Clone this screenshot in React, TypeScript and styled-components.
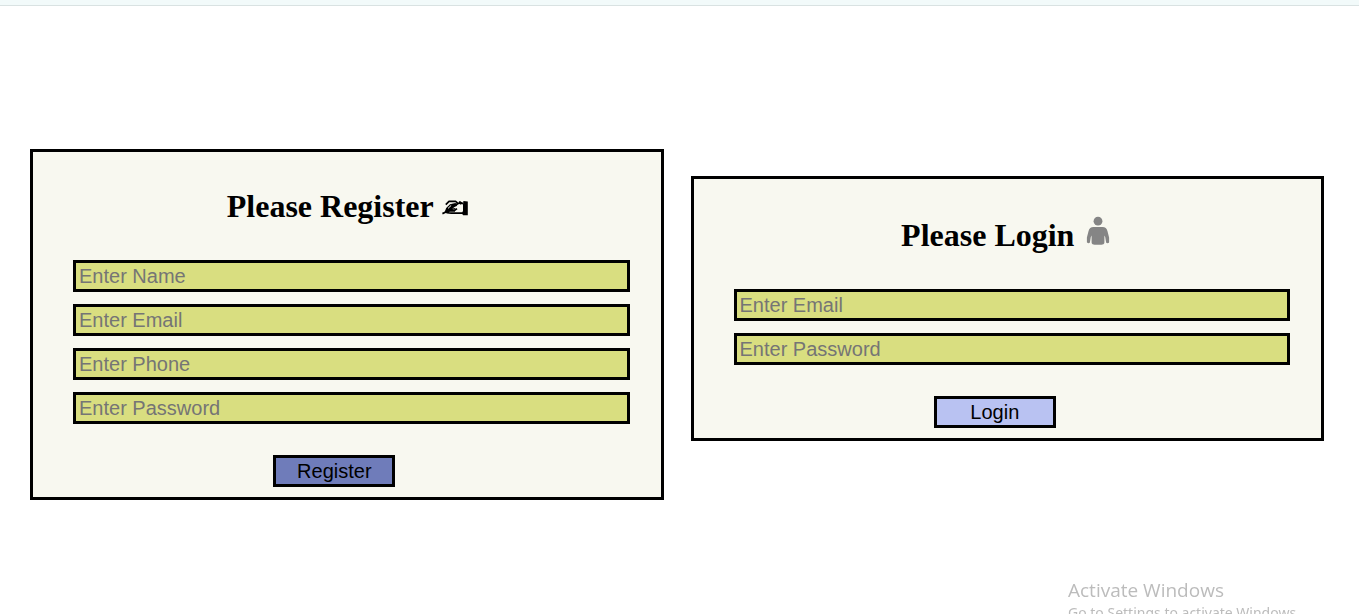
import React from "react";
import styled, { createGlobalStyle } from "styled-components";

const GlobalStyle = createGlobalStyle`
  *, *::before, *::after { box-sizing: border-box; }
  body { margin: 0; background: #fff; }
`;

const TopBar = styled.header`
  height: 6px;
  background: #f2fafa;
  border-bottom: 1px solid #d9e2e2;
`;

const Forms = styled.main`
  display: grid;
  grid-template-columns: 1fr 1fr;
  align-items: start;
  gap: 27px;
  padding: 143px 35px 0 30px;
`;

const Card = styled.form<{ $lowered?: boolean }>`
  display: flex;
  flex-direction: column;
  margin-top: ${(p) => (p.$lowered ? 27 : 0)}px;
  padding: 34px 31px 10px 40px;
  border: 3px solid #000;
  background: #f8f8f0;
`;

const Title = styled.h1<{ $tall?: boolean }>`
  display: flex;
  align-items: center;
  justify-content: center;
  gap: 8px;
  height: ${(p) => (p.$tall ? 42 : 40)}px;
  margin: 0 8px 34px 0;
  padding-top: ${(p) => (p.$tall ? 2 : 0)}px;
  font: bold 32px/36px "Liberation Serif", "Times New Roman", serif;
  color: #000;
`;

const Fields = styled.div`
  display: flex;
  flex-direction: column;
  gap: 12px;
`;

const Field = styled.input`
  width: 100%;
  height: 32px;
  padding: 1px 3px;
  border: 3px solid #000;
  border-radius: 0;
  outline: none;
  background: #d9de80;
  color: #000;
  font: 20px/24px "Liberation Sans", Arial, sans-serif;

  &::placeholder {
    color: #757575;
    opacity: 1;
  }
`;

const Submit = styled.button<{ $color: string }>`
  width: 122px;
  height: 32px;
  margin: 31px 0 0 36%;
  padding: 0;
  border: 3px solid #000;
  border-radius: 0;
  background: ${(p) => p.$color};
  color: #000;
  font: 20px/24px "Liberation Sans", Arial, sans-serif;
`;

const Watermark = styled.aside`
  position: fixed;
  right: 55px;
  bottom: -9px;
  width: 236px;
  color: #bcbcbc;
  font-family: "Segoe UI", "Open Sans", sans-serif;
  pointer-events: none;
`;

const WatermarkTitle = styled.p`
  margin: 0;
  font-size: 19px;
  line-height: 25px;
`;

const WatermarkText = styled.p`
  margin: 0;
  font-family: "Segoe UI", "Noto Sans", sans-serif;
  font-size: 14px;
  line-height: 20px;
  white-space: nowrap;
`;

const HandDrawing = styled.svg`
  flex: none;
  margin-top: 4px;
`;

const PersonDrawing = styled.svg`
  flex: none;
  margin-bottom: 8px;
`;

const WritingHand = () => (
  <HandDrawing width="26" height="16" viewBox="0 0 26 16" aria-hidden="true">
    <path d="M21.4 1 25.8 1.6V15.2H21.2L19.6 13.2 21 11V4.6z" fill="#000" />
    <path
      d="M21 3.6 18 2.4 16.2 3.6 13.6 1.4H7L3.8 4.6M20.4 13.2H9.4L5 12.6 7.6 10.8H13M.4 13.6 4 12 15.6 3.8M17.6 1.2 18.8 4.4M12 10.8 15 8.6"
      fill="none"
      stroke="#000"
      strokeWidth="1.7"
      strokeLinejoin="round"
    />
    <path
      d="M2.4 12.4 4.2 8 8 4.2 13.4 3 15.4 4.4 14.4 6.2 11.6 6.4 10 8.4 13.6 8 12.6 9.6 8 10.4 4.6 12.8z"
      fill="#000"
    />
    <path d="M6 8.4 9.2 5.4" stroke="#f8f8f0" strokeWidth="1" />
  </HandDrawing>
);

const Person = () => (
  <PersonDrawing width="32" height="32" viewBox="0 0 32 32" aria-hidden="true">
    <g fill="#858585">
      <circle cx="16" cy="6.2" r="4.4" />
      <path d="M11.5 12h9c2.8 0 4.2 1.3 5 4.2l1.6 6.3v4.8c0 1-2.6 1.2-3 .2l-.9-5.5-.8-1.6v7.2c0 1.4-1.6 2.2-3 2.2h-6.8c-1.4 0-3-.8-3-2.2v-7.2l-.8 1.6-.9 5.5c-.4 1-3 .8-3-.2v-4.8l1.6-6.3c.8-2.9 2.2-4.2 5-4.2z" />
    </g>
  </PersonDrawing>
);

const fieldTypes: Record<string, string> = {
  Name: "text",
  Email: "email",
  Phone: "tel",
  Password: "password",
};

const FieldList = ({ names }: { names: string[] }) => (
  <Fields>
    {names.map((name) => (
      <Field
        key={name}
        type={fieldTypes[name]}
        placeholder={`Enter ${name}`}
        aria-label={`Enter ${name}`}
      />
    ))}
  </Fields>
);

export default function App() {
  return (
    <>
      <GlobalStyle />
      <TopBar />
      <Forms>
        <Card>
          <Title>
            Please Register <WritingHand />
          </Title>
          <FieldList names={["Name", "Email", "Phone", "Password"]} />
          <Submit type="button" $color="#6f7cba">
            Register
          </Submit>
        </Card>
        <Card $lowered>
          <Title $tall>
            Please Login <Person />
          </Title>
          <FieldList names={["Email", "Password"]} />
          <Submit type="button" $color="#b9c2f2">
            Login
          </Submit>
        </Card>
      </Forms>
      <Watermark>
        <WatermarkTitle>Activate Windows</WatermarkTitle>
        <WatermarkText>Go to Settings to activate Windows.</WatermarkText>
      </Watermark>
    </>
  );
}
